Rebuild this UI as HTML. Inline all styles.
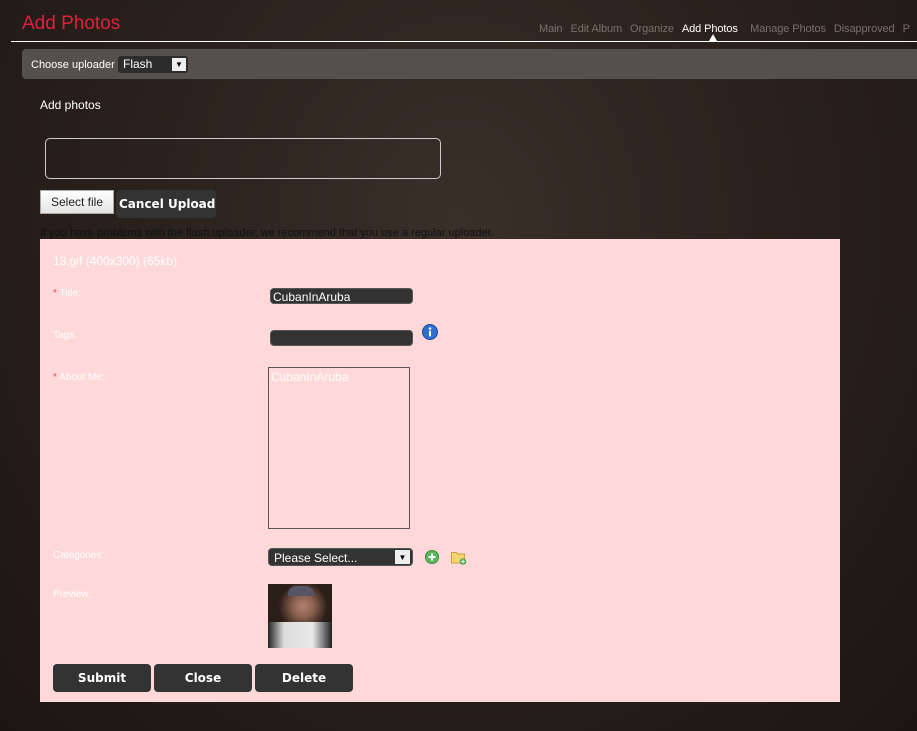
<!DOCTYPE html>
<html><head><style>
body{margin:0;width:917px;height:731px;overflow:hidden;background:#2a211d;font-family:"Liberation Sans",sans-serif;position:relative;
background:radial-gradient(ellipse at 50% 30%,#3a2f29 0%,#2a211c 50%,#1c1512 100%);}
.a{position:absolute}
.nav span{margin-right:8px;color:#7a6f6a;font-size:11px}
.lbl{color:#fff;font-size:10px}
.inp{background:#333;border-radius:4px;border:1px solid #555}
.btn{background:#333;border-radius:4px;color:#fff;font-weight:bold;font-size:12px;text-align:center;line-height:28px;font-family:"DejaVu Sans",sans-serif}
</style></head><body>
<div class="a" style="left:22px;top:13px;color:#e0203d;font-size:19px">Add Photos</div>
<div class="a nav" style="left:539px;top:19px;white-space:nowrap;letter-spacing:-0.1px"><span>Main</span><span>Edit Album</span><span>Organize</span><span style="color:#fff">Add Photos</span> <span>Manage Photos</span><span>Disapproved</span><span>P</span></div>
<div class="a" style="left:709px;top:34px;width:0;height:0;border-left:4px solid transparent;border-right:4px solid transparent;border-bottom:7px solid #fff"></div>
<div class="a" style="left:11px;top:41px;width:906px;height:1px;background:#fff"></div>
<div class="a" style="left:22px;top:49px;width:900px;height:30px;background:#54504c;border-radius:4px"></div>
<div class="a" style="left:31px;top:59px;color:#fff;font-size:11px">Choose uploader</div>
<div class="a" style="left:118px;top:56px;width:70px;height:17px;background:#2c2c2c;border-radius:3px;color:#fff;font-size:12px;line-height:17px;padding-left:5px;box-sizing:border-box">Flash</div>
<div class="a" style="left:172px;top:58px;width:14px;height:13px;background:#eee;font-size:8px;text-align:center;line-height:14px">▼</div>
<div class="a" style="left:40px;top:98px;color:#fff;font-size:12px">Add photos</div>
<div class="a" style="left:45px;top:138px;width:396px;height:41px;border:1px solid #ccc;border-radius:5px;box-sizing:border-box"></div>
<div class="a" style="left:40px;top:190px;width:74px;height:24px;background:linear-gradient(#fff,#e4e4e4);border:1px solid #aaa;box-sizing:border-box;font-size:12px;color:#222;line-height:22px;text-align:center">Select file</div>
<div class="a" style="left:116px;top:190px;width:100px;height:28px;background:#333;border-radius:4px;color:#fff;font-weight:bold;font-size:12px;line-height:29px;padding-left:3px;box-sizing:border-box;overflow:hidden;font-family:'DejaVu Sans',sans-serif;white-space:nowrap">Cancel Uploads</div>
<div class="a" style="left:40px;top:227px;color:#111;font-size:11px">If you have problems with the flash uploader, we recommend that you use a regular uploader.</div>
<div class="a" style="left:40px;top:239px;width:800px;height:463px;background:#ffd9d9"></div>
<div class="a lbl" style="left:53px;top:254px;font-size:12px">13.gif (400x300) (65kb)</div>
<div class="a lbl" style="left:53px;top:288px"><span style="color:#f44">*</span> Title:</div>
<div class="a inp" style="left:270px;top:288px;width:143px;height:16px;color:#fff;font-size:12px;line-height:16px;padding-left:2px;box-sizing:border-box">CubanInAruba</div>
<div class="a lbl" style="left:53px;top:330px">Tags:</div>
<div class="a inp" style="left:270px;top:330px;width:143px;height:16px;box-sizing:border-box"></div>
<svg class="a" style="left:422px;top:324px" width="16" height="16"><circle cx="8" cy="8" r="7.5" fill="#2f6fd0" stroke="#1b4a90"/><circle cx="8" cy="4.5" r="1.3" fill="#fff"/><rect x="7" y="6.8" width="2" height="5.5" fill="#fff"/></svg>
<div class="a lbl" style="left:53px;top:372px"><span style="color:#f44">*</span> About Me:</div>
<div class="a" style="left:268px;top:367px;width:142px;height:162px;border:1px solid #555;box-sizing:border-box;color:#fff;font-size:12px;padding:2px">CubanInAruba</div>
<div class="a lbl" style="left:53px;top:550px">Categories:</div>
<div class="a inp" style="left:268px;top:548px;width:145px;height:18px;color:#fff;font-size:12px;line-height:18px;padding-left:5px;box-sizing:border-box">Please Select...</div>
<div class="a" style="left:395px;top:550px;width:15px;height:14px;background:#eee;font-size:8px;text-align:center;line-height:15px">▼</div>
<svg class="a" style="left:425px;top:550px" width="14" height="14"><circle cx="7" cy="7" r="6.5" fill="#5cb85c" stroke="#3a8a3a"/><rect x="6" y="3.5" width="2" height="7" fill="#fff"/><rect x="3.5" y="6" width="7" height="2" fill="#fff"/></svg>
<svg class="a" style="left:451px;top:550px" width="16" height="15"><path d="M0.5 2.5h5l1 1.5h7v9h-13z" fill="#f5d56b" stroke="#c9a23a"/><circle cx="12" cy="11.5" r="3.3" fill="#4aa84a"/><path d="M12 9.5v4M10 11.5h4" stroke="#fff"/></svg>
<div class="a lbl" style="left:53px;top:589px">Preview:</div>
<div class="a" style="left:268px;top:584px;width:64px;height:64px;background:radial-gradient(circle at 55% 35%,#b08070 0%,#8a6050 20%,#2a1e18 45%),linear-gradient(#1a1410,#ddd);"><div style="position:absolute;left:0;top:38px;width:64px;height:26px;background:linear-gradient(90deg,#222 0%,#ddd 25%,#e8e8e8 70%,#222 100%)"></div><div style="position:absolute;left:20px;top:2px;width:26px;height:10px;background:#556;border-radius:8px 8px 0 0"></div></div>
<div class="a btn" style="left:53px;top:664px;width:98px;height:28px">Submit</div>
<div class="a btn" style="left:154px;top:664px;width:98px;height:28px">Close</div>
<div class="a btn" style="left:255px;top:664px;width:98px;height:28px">Delete</div>
</body></html>
